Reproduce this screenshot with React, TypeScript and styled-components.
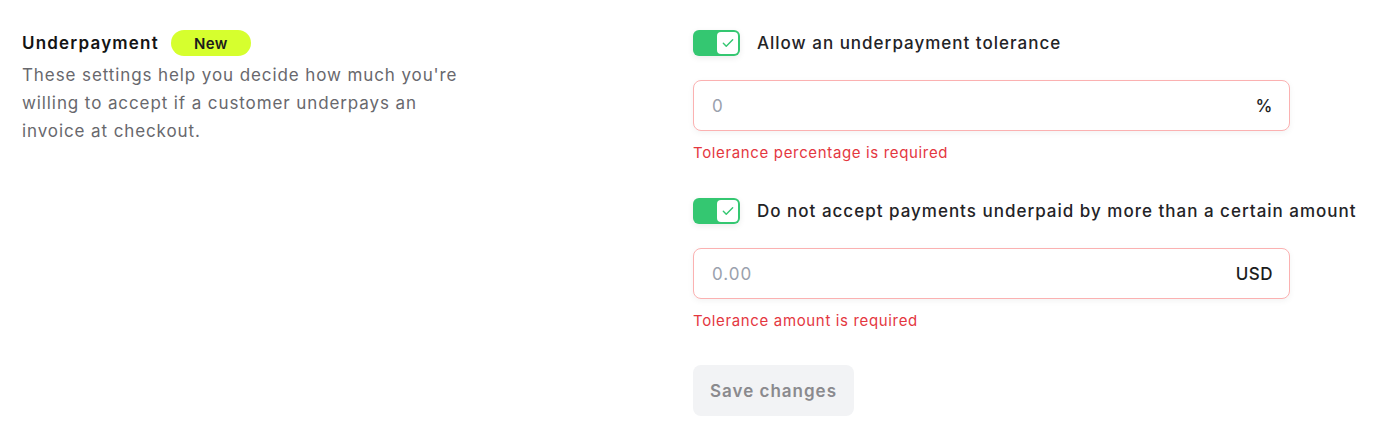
import React, { useState } from "react";
import styled, { createGlobalStyle } from "styled-components";

const GlobalStyle = createGlobalStyle`
	html, body {
		margin: 0;
		padding: 0;
		background: #ffffff;
		font-family: Inter, "Noto Sans", sans-serif;
		-webkit-font-smoothing: antialiased;
	}
	* {
		box-sizing: border-box;
	}
`;

const Page = styled.div`
	display: grid;
	grid-template-columns: 671px 597px;
	padding: 30px 22px 13px;
	width: 1380px;
`;

const Intro = styled.div`
	display: flex;
	flex-direction: column;
`;

const TitleRow = styled.div`
	display: flex;
	align-items: center;
	gap: 12px;
	height: 26px;
`;

const Title = styled.h3`
	margin: 0;
	font-size: 17px;
	font-weight: 600;
	letter-spacing: 1.2px;
	color: #141414;
`;

const Badge = styled.span`
	display: inline-flex;
	align-items: center;
	justify-content: center;
	width: 80px;
	height: 26px;
	border-radius: 13px;
	background: #d6ff2e;
	color: #1c1c1c;
	font-size: 15px;
	font-weight: 600;
	letter-spacing: 0.4px;
`;

const Description = styled.p`
	margin: 5px 0 0;
	max-width: 448px;
	font-size: 17px;
	line-height: 28px;
	letter-spacing: 0.9px;
	color: #68686d;
`;

const Form = styled.div`
	display: flex;
	flex-direction: column;
`;

const ToggleRow = styled.label`
	display: flex;
	align-items: center;
	gap: 17px;
	height: 26px;
	white-space: nowrap;
	cursor: pointer;
`;

const Switch = styled.button<{ $on: boolean }>`
	flex-shrink: 0;
	display: flex;
	align-items: center;
	justify-content: ${(p) => (p.$on ? "flex-end" : "flex-start")};
	width: 47px;
	height: 26px;
	padding: 2px;
	border: none;
	border-radius: 6px;
	background: ${(p) => (p.$on ? "#34c771" : "#d9dce1")};
	box-shadow: 0 2px 6px rgba(0, 0, 0, 0.08);
	cursor: pointer;
`;

const Knob = styled.span`
	display: flex;
	align-items: center;
	justify-content: center;
	width: 21px;
	height: 22px;
	border-radius: 4px;
	background: #ffffff;
`;

const ToggleLabel = styled.span`
	font-size: 17px;
	font-weight: 500;
	letter-spacing: 1px;
	color: #232326;
`;

const Field = styled.div`
	display: flex;
	align-items: center;
	justify-content: space-between;
	margin-top: 24px;
	height: 51px;
	padding: 0 16px;
	border: 1px solid #fbb1b1;
	border-radius: 8px;
	background: #ffffff;
	box-shadow: 0 2px 6px rgba(0, 0, 0, 0.05);
`;

const Input = styled.input`
	flex: 1;
	border: none;
	outline: none;
	background: transparent;
	font-family: inherit;
	font-size: 17px;
	letter-spacing: 1px;
	color: #232326;
	&::placeholder {
		color: #9aa1ad;
	}
`;

const Unit = styled.span`
	font-size: 17px;
	font-weight: 500;
	letter-spacing: 0.5px;
	color: #1c1c1c;
`;

const ErrorText = styled.div`
	margin-top: 12px;
	font-size: 15px;
	line-height: 20px;
	letter-spacing: 0.65px;
	color: #e4373f;
`;

const Group = styled.div`
	display: flex;
	flex-direction: column;
	& + & {
		margin-top: 35px;
	}
`;

const SaveButton = styled.button`
	align-self: flex-start;
	margin-top: 34px;
	width: 161px;
	height: 51px;
	border: none;
	border-radius: 8px;
	background: #f2f3f5;
	color: #8a8a8e;
	font-family: inherit;
	font-size: 17px;
	font-weight: 600;
	letter-spacing: 1px;
`;

const Check = () => (
	<svg width="14" height="14" viewBox="0 0 24 24" fill="none" stroke="#34c771" strokeWidth="2.4" strokeLinecap="round" strokeLinejoin="round">
		<path d="M4 12.5l5 5L20 6.5" />
	</svg>
);

interface ToleranceProps {
	label: string;
	placeholder: string;
	unit: string;
	error: string;
}

const ToleranceGroup = ({ label, placeholder, unit, error }: ToleranceProps) => {
	const [on, setOn] = useState(true);
	return (
		<Group>
			<ToggleRow>
				<Switch $on={on} onClick={() => setOn(!on)}>
					<Knob>{on && <Check />}</Knob>
				</Switch>
				<ToggleLabel>{label}</ToggleLabel>
			</ToggleRow>
			<Field>
				<Input placeholder={placeholder} />
				<Unit>{unit}</Unit>
			</Field>
			<ErrorText>{error}</ErrorText>
		</Group>
	);
};

const App: React.FC = () => {
	return (
		<>
			<GlobalStyle />
			<Page>
				<Intro>
					<TitleRow>
						<Title>Underpayment</Title>
						<Badge>New</Badge>
					</TitleRow>
					<Description>
						These settings help you decide how much you're willing to accept if a customer underpays an invoice at checkout.
					</Description>
				</Intro>
				<Form>
					<ToleranceGroup
						label="Allow an underpayment tolerance"
						placeholder="0"
						unit="%"
						error="Tolerance percentage is required"
					/>
					<ToleranceGroup
						label="Do not accept payments underpaid by more than a certain amount"
						placeholder="0.00"
						unit="USD"
						error="Tolerance amount is required"
					/>
					<SaveButton>Save changes</SaveButton>
				</Form>
			</Page>
		</>
	);
};

export default App;
